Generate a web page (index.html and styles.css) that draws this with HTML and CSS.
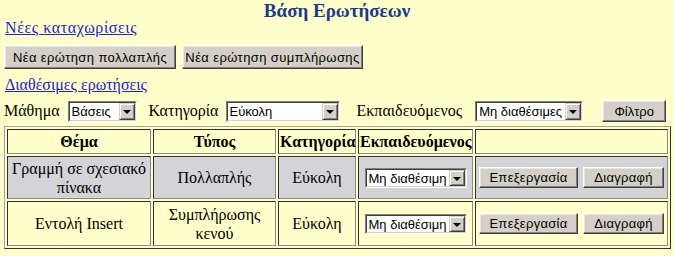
FILE: index.html
```html
<!DOCTYPE html>
<html lang="el">
<head>
<meta charset="utf-8">
<title>Βάση Ερωτήσεων</title>
<link rel="stylesheet" href="styles.css">
</head>
<body>
<h1 class="title">Βάση Ερωτήσεων</h1>
<a class="link link-new" href="#">Νέες καταχωρίσεις</a>
<div class="actions">
  <button class="btn btn-new">Νέα ερώτηση πολλαπλής</button>
  <button class="btn btn-new">Νέα ερώτηση συμπλήρωσης</button>
</div>
<a class="link link-avail" href="#">Διαθέσιμες ερωτήσεις</a>
<div class="filters">
  <span class="lbl lbl-course">Μάθημα</span>
  <span class="sel sel-course"><span class="sel-in"><span class="sel-val">Βάσεις</span><span class="arr"></span></span></span>
  <span class="lbl lbl-cat">Κατηγορία</span>
  <span class="sel sel-cat"><span class="sel-in"><span class="sel-val">Εύκολη</span><span class="arr"></span></span></span>
  <span class="lbl lbl-stu">Εκπαιδευόμενος</span>
  <span class="sel sel-stu"><span class="sel-in"><span class="sel-val">Μη διαθέσιμες</span><span class="arr"></span></span></span>
  <button class="btn btn-filter">Φίλτρο</button>
</div>
<table class="grid">
  <colgroup>
    <col class="c1"><col class="c2"><col class="c3"><col class="c4"><col class="c5">
  </colgroup>
  <thead>
    <tr class="head">
      <th>Θέμα</th><th>Τύπος</th><th>Κατηγορία</th><th>Εκπαιδευόμενος</th><th></th>
    </tr>
  </thead>
  <tbody>
    <tr class="row row-grey">
      <td>Γραμμή σε σχεσιακό πίνακα</td>
      <td>Πολλαπλής</td>
      <td>Εύκολη</td>
      <td><span class="sel sel-row"><span class="sel-in"><span class="sel-val">Μη διαθέσιμη</span><span class="arr"></span></span></span></td>
      <td><div class="row-btns"><button class="btn btn-row btn-edit">Επεξεργασία</button><button class="btn btn-row btn-del">Διαγραφή</button></div></td>
    </tr>
    <tr class="row row-plain">
      <td>Εντολή Insert</td>
      <td>Συμπλήρωσης κενού</td>
      <td>Εύκολη</td>
      <td><span class="sel sel-row"><span class="sel-in"><span class="sel-val">Μη διαθέσιμη</span><span class="arr"></span></span></span></td>
      <td><div class="row-btns"><button class="btn btn-row btn-edit">Επεξεργασία</button><button class="btn btn-row btn-del">Διαγραφή</button></div></td>
    </tr>
  </tbody>
</table>
</body>
</html>
```

FILE: styles.css
```css
html, body {
  margin: 0;
  background: #FFFFCC;
}
body {
  padding: 0 4px;
  font: 16px/18px "Liberation Serif", "Times New Roman", serif;
  color: #000;
}
.title {
  margin: 0;
  padding-top: 2px;
  text-align: center;
  font: bold 19px/18px "Liberation Serif", serif;
  color: #1C3A8A;
}
.link {
  display: block;
  width: max-content;
  margin-left: 1px;
  color: #2323C8;
  text-decoration: underline;
  line-height: 18px;
}
.link-new { letter-spacing: 0.6px; margin-top: -1px; }
.actions {
  display: flex;
  gap: 6px;
  padding: 8px 0 7px 0;
}
.btn {
  box-sizing: border-box;
  margin: 0;
  font: 13px "Liberation Sans", Arial, sans-serif;
  color: #000;
  background: #D4D0C8;
  border: 1px solid;
  border-color: #FFFFFF #404040 #404040 #FFFFFF;
  box-shadow: inset -1px -1px #808080, inset 1px 1px #E8E6E0;
  padding: 0;
  height: 24px;
  white-space: nowrap;
}
.btn-new { letter-spacing: 0.4px; }
.btn-new:first-child { width: 172px; }
.btn-new:last-child { width: 181px; }
.filters {
  display: flex;
  align-items: center;
  height: 26px;
  margin-top: 4px;
}
.lbl { white-space: nowrap; }
.sel {
  box-sizing: border-box;
  display: inline-flex;
  height: 21px;
  border: 1px solid;
  border-color: #808080 #FFFFFF #FFFFFF #808080;
  background: #fff;
}
.sel-in {
  flex: 1;
  display: flex;
  align-items: center;
  border: 1px solid;
  border-color: #404040 #D4D0C8 #D4D0C8 #404040;
  min-width: 0;
}
.sel-val {
  flex: 1;
  padding-left: 2px;
  font: 13px/15px "Liberation Sans", Arial, sans-serif;
  white-space: nowrap;
  overflow: hidden;
  text-align: left;
}
.arr {
  box-sizing: border-box;
  width: 16px;
  height: 100%;
  flex: none;
  background: #D4D0C8;
  border: 1px solid;
  border-color: #D4D0C8 #404040 #404040 #D4D0C8;
  box-shadow: inset 1px 1px #FFFFFF, inset -1px -1px #808080;
  display: flex;
  align-items: center;
  justify-content: center;
}
.arr::after {
  content: "";
  border-left: 4px solid transparent;
  border-right: 4px solid transparent;
  border-top: 4px solid #000;
  margin-top: 1px;
}
.sel-course { width: 69px; margin-left: 8px; }
.lbl-cat { margin-left: 12px; }
.sel-cat { width: 114px; margin-left: 7px; }
.lbl-stu { margin-left: 17px; }
.sel-stu { width: 108px; margin-left: 13px; }
.btn-filter { width: 64px; height: 22px; margin-left: 19px; }

.grid {
  box-sizing: border-box;
  width: 667px;
  table-layout: fixed;
  border-collapse: separate;
  border-spacing: 2px;
  border: 1px solid;
  border-color: #A0A0A0 #303030 #303030 #A0A0A0;
  margin-top: 2px;
}
.c1 { width: 144px; }
.c2 { width: 123px; }
.c3 { width: 78px; }
.c4 { width: 115px; }
.c5 { width: 193px; }
.grid th, .grid td {
  box-sizing: border-box;
  border: 1px solid;
  border-color: #303030 #8A8A8A #8A8A8A #303030;
  padding: 1px;
  text-align: center;
  vertical-align: middle;
  line-height: 19px;
}
.grid th {
  font-weight: bold;
  white-space: nowrap;
  height: 25px;
}
.row-grey td { background: #D4D4D8; height: 43px; }
.row-plain td { height: 45px; }
.sel-row { width: 102px; height: 20px; vertical-align: middle; }
.row-btns {
  display: flex;
  justify-content: center;
  gap: 5px;
}
.btn-row { height: 21px; letter-spacing: 0.3px; }
.btn-edit { width: 99px; }
.btn-del { width: 81px; }
```
